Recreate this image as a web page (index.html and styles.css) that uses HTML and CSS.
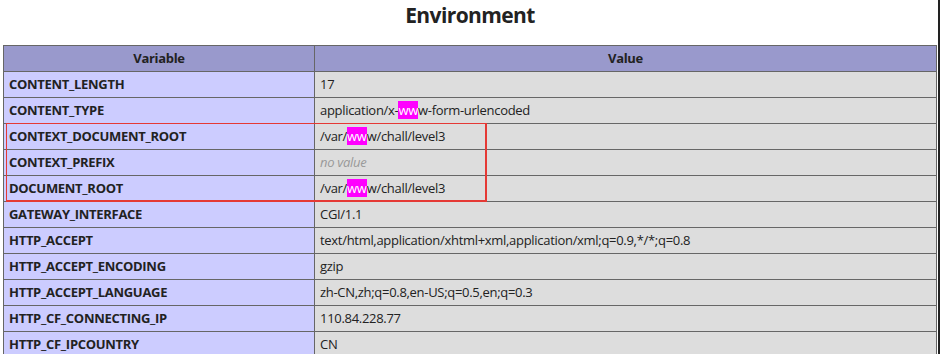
FILE: index.html
```html
<!DOCTYPE html>
<html>
<head>
<meta charset="utf-8">
<title>Environment</title>
<link rel="stylesheet" href="styles.css">
</head>
<body>
<div class="page">
  <h2 class="title">Environment</h2>
  <div class="wrap">
    <table class="env">
      <tr class="h"><th class="ce">Variable</th><th>Value</th></tr>
      <tr><td class="e">CONTENT_LENGTH</td><td class="v">17</td></tr>
      <tr><td class="e">CONTENT_TYPE</td><td class="v">application/x-<span class="hl">ww</span>w-form-urlencoded</td></tr>
      <tr><td class="e">CONTEXT_DOCUMENT_ROOT</td><td class="v">/var/<span class="hl">ww</span>w/chall/level3</td></tr>
      <tr><td class="e">CONTEXT_PREFIX</td><td class="v"><i class="nv">no value</i></td></tr>
      <tr><td class="e">DOCUMENT_ROOT</td><td class="v">/var/<span class="hl">ww</span>w/chall/level3</td></tr>
      <tr><td class="e">GATEWAY_INTERFACE</td><td class="v">CGI/1.1</td></tr>
      <tr><td class="e">HTTP_ACCEPT</td><td class="v">text/html,application/xhtml+xml,application/xml;q=0.9,*/*;q=0.8</td></tr>
      <tr><td class="e">HTTP_ACCEPT_ENCODING</td><td class="v">gzip</td></tr>
      <tr><td class="e">HTTP_ACCEPT_LANGUAGE</td><td class="v">zh-CN,zh;q=0.8,en-US;q=0.5,en;q=0.3</td></tr>
      <tr><td class="e">HTTP_CF_CONNECTING_IP</td><td class="v">110.84.228.77</td></tr>
      <tr><td class="e">HTTP_CF_IPCOUNTRY</td><td class="v">CN</td></tr>
    </table>
    <div class="mark"></div>
  </div>
</div>
<div class="edge"></div>
</body>
</html>
```
FILE: styles.css
```css
html, body {
  margin: 0;
  padding: 0;
  background: #fff;
  overflow: hidden;
}
body {
  font-family: "Open Sans", "Noto Sans", sans-serif;
  color: #222;
  font-size: 13px;
}
.page {
  width: 940px;
  height: 354px;
  overflow: hidden;
}
.title {
  margin: 0;
  height: 45px;
  box-sizing: border-box;
  padding-top: 1px;
  text-align: center;
  font-size: 21px;
  line-height: 28px;
  font-weight: 700;
  letter-spacing: -0.6px;
}
.wrap {
  position: relative;
  width: 934px;
  margin: 0 auto 0 3px;
}
.env {
  border-collapse: collapse;
  width: 934px;
  table-layout: fixed;
  letter-spacing: -0.3px;
}
.env th, .env td {
  border: 1px solid #666;
  padding: 4px 5px;
  line-height: 17px;
  height: 17px;
  white-space: nowrap;
  vertical-align: middle;
}
.env th {
  background: #9999cc;
  font-weight: 700;
  text-align: center;
}
.env th.ce { width: 300px; }
.e {
  background: #ccccff;
  font-weight: 700;
  width: 300px;
}
.v {
  background: #dddddd;
}
.nv {
  color: #999;
}
.hl {
  background: #ff00ff;
  color: #fff;
}
.mark {
  position: absolute;
  left: 3px;
  top: 78px;
  width: 478px;
  height: 76px;
  border: 1px solid #e53935;
  border-right-width: 2px;
  border-bottom-width: 2px;
  box-sizing: content-box;
}
.edge {
  position: absolute;
  top: 0;
  right: 0;
  width: 2px;
  height: 354px;
  background: #222;
}
```
